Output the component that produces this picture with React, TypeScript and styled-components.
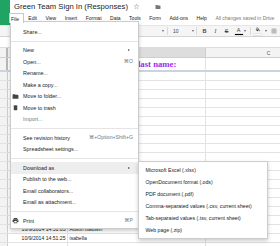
import React from 'react';
import styled, { createGlobalStyle } from 'styled-components';

const GlobalStyle = createGlobalStyle`
  html, body { margin: 0; padding: 0; background: #fff; }
  body { font-family: "Liberation Sans", Arial, sans-serif; overflow: hidden; }
  * { box-sizing: border-box; }
`;

const Page = styled.div`
  position: relative;
  width: 280px;
  height: 246px;
  overflow: hidden;
  background: #fff;
  display: flex;
  flex-direction: column;
`;

/* ---------- header ---------- */
const Header = styled.header`
  display: flex;
  height: 25px;
  flex: none;
`;
const Logo = styled.div`
  width: 10px;
  height: 25px;
  background: #1fa463;
  flex: none;
`;
const HeaderMain = styled.div`
  display: flex;
  flex-direction: column;
  padding-left: 4px;
  min-width: 0;
`;
const TitleRow = styled.div`
  display: flex;
  align-items: center;
  height: 13px;
  gap: 5px;
  white-space: nowrap;
`;
const Title = styled.span`
  font-size: 7.7px;
  color: #222;
`;
const TitleIcon = styled.span<{ $ml?: number }>`
  display: flex;
  margin-left: ${p => p.$ml ?? 0}px;
`;
const MenuBar = styled.nav`
  display: flex;
  height: 9px;
  margin-left: -4.7px;
  font-size: 5px;
  color: #222;
  white-space: nowrap;
`;
const MenuTab = styled.div<{ $active?: boolean }>`
  position: relative;
  display: flex;
  align-items: center;
  padding: ${p => (p.$active ? '0 4px 0 0.7px' : '0 4.25px')};
  ${p =>
    p.$active &&
    `
    background: #fff;
    border: 1px solid #c8c8c8;
    border-bottom: none;
    height: 10px;
    z-index: 5;
  `}
`;
const SavedNote = styled.div`
  display: flex;
  align-items: center;
  padding-left: 4.25px;
  color: #777;
`;

/* ---------- toolbar ---------- */
const Toolbar = styled.div`
  display: flex;
  align-items: center;
  height: 12px;
  flex: none;
  background: #f5f5f5;
  border-top: 1px solid #e6e6e6;
  border-bottom: 1px solid #d4d4d4;
  padding-left: 12px;
  font-size: 5px;
  color: #444;
  white-space: nowrap;
`;
const ToolBtn = styled.div<{ $w: number }>`
  width: ${p => p.$w}px;
  flex: none;
  height: 100%;
  display: flex;
  align-items: center;
  justify-content: center;
  gap: 1px;
`;
const ToolSep = styled.div<{ $m?: number }>`
  width: 1px;
  height: 8px;
  background: #dadada;
  margin: 0 ${p => p.$m ?? 3}px;
  flex: none;
`;
const Select = styled.div<{ $w: number; $pl: number }>`
  width: ${p => p.$w}px;
  flex: none;
  display: flex;
  align-items: center;
  justify-content: space-between;
  padding: 0 0.5px 0 ${p => p.$pl}px;
`;
const Caret = styled.span`
  width: 0;
  height: 0;
  border-left: 1.5px solid transparent;
  border-right: 1.5px solid transparent;
  border-top: 2px solid #666;
  flex: none;
`;
const Glyph = styled.span<{ $weight?: number; $italic?: boolean; $strike?: boolean; $serif?: boolean }>`
  font-size: 5.5px;
  color: #444;
  font-weight: ${p => p.$weight ?? 400};
  font-style: ${p => (p.$italic ? 'italic' : 'normal')};
  text-decoration: ${p => (p.$strike ? 'line-through' : 'none')};
  font-family: ${p => (p.$serif ? '"Liberation Serif", serif' : 'inherit')};
`;
const ColorGlyph = styled.span<{ $bar: string }>`
  display: flex;
  flex-direction: column;
  align-items: center;
  gap: 0.5px;
  &::after {
    content: '';
    width: 8px;
    height: 1.5px;
    background: ${p => p.$bar};
    box-shadow: 0 0 0 0.3px #bbb;
  }
`;

/* ---------- formula bar ---------- */
const FormulaBar = styled.div`
  height: 11px;
  flex: none;
  display: flex;
  align-items: center;
  padding-left: 14px;
  border-bottom: 1px solid #dcdcdc;
  font-size: 5px;
  font-style: italic;
  color: #999;
`;

/* ---------- sheet ---------- */
const COLS = '8px 60px 138px 126px';
const Sheet = styled.div`
  display: flex;
  flex-direction: column;
  flex: none;
`;
const SheetRow = styled.div<{ $h: number; $kind?: 'head' | 'frozen' | 'data' }>`
  display: grid;
  grid-template-columns: ${COLS};
  height: ${p => p.$h}px;
  flex: none;
  border-bottom: ${p =>
    p.$kind === 'frozen' ? '2px solid #ccd3e0' : p.$kind === 'head' ? '1px solid #cfcfcf' : '1px solid #e3e3e3'};
  background: ${p => (p.$kind === 'head' ? '#f3f3f3' : '#fff')};
`;
const RowHead = styled.div<{ $handle?: boolean }>`
  background: #f3f3f3;
  border-right: ${p => (p.$handle ? '2px solid #b9b9b9' : '1px solid #cfcfcf')};
`;
const ColHead = styled.div<{ $sel?: boolean }>`
  background: ${p => (p.$sel ? '#dddddd' : '#f3f3f3')};
  border-right: 1px solid #cfcfcf;
  display: flex;
  align-items: center;
  justify-content: center;
  font-size: 5px;
  color: #555;
`;
const Cell = styled.div<{ $align?: 'left' | 'right' }>`
  border-right: 1px solid #e3e3e3;
  display: flex;
  align-items: flex-end;
  justify-content: ${p => (p.$align === 'right' ? 'flex-end' : 'flex-start')};
  padding: 0 1.5px 0.5px;
  font-size: 5.1px;
  line-height: 1.2;
  color: #222;
  white-space: nowrap;
  min-width: 0;
`;
const QuestionText = styled.span`
  font-family: "Liberation Serif", "Times New Roman", serif;
  font-weight: 700;
  font-size: 8.7px;
  color: #9a2cf0;
`;

/* ---------- dropdown menu ---------- */
const MenuPanel = styled.div`
  position: absolute;
  left: 9.5px;
  top: 21px;
  width: 129px;
  background: #fff;
  border: 1px solid rgba(0, 0, 0, 0.2);
  box-shadow: 0 2px 4px rgba(0, 0, 0, 0.2);
  padding: 4px 0 1px;
  z-index: 2;
  font-size: 5.4px;
  color: #222;
`;
const MenuRow = styled.div<{ $hl?: boolean; $muted?: boolean }>`
  position: relative;
  display: grid;
  grid-template-columns: 12.5px 1fr auto;
  align-items: center;
  height: 11.5px;
  padding-right: 4.5px;
  background: ${p => (p.$hl ? '#eeeeee' : 'transparent')};
  color: ${p => (p.$muted ? '#777' : '#222')};
  white-space: nowrap;
`;
const IconCell = styled.span`
  display: flex;
  align-items: center;
  padding-left: 1.5px;
`;
const Label = styled.span`
  justify-self: start;
`;
const Shortcut = styled.span`
  color: #777;
  font-size: 5.2px;
  line-height: 1;
  font-family: "Liberation Sans", "DejaVu Sans", sans-serif;
`;
const SubArrow = styled.span`
  width: 0;
  height: 0;
  border-left: 2.5px solid #555;
  border-top: 1.6px solid transparent;
  border-bottom: 1.6px solid transparent;
  margin-right: 3px;
`;
const MenuSep = styled.div`
  height: 1px;
  background: #e5e5e5;
  margin: 3px 0;
`;
const SubMenu = styled.div`
  position: absolute;
  left: 100%;
  top: -1px;
  width: 130px;
  background: #fff;
  border: 1px solid rgba(0, 0, 0, 0.2);
  box-shadow: 0 2px 4px rgba(0, 0, 0, 0.2);
  padding: 2px 0;
  z-index: 3;
  font-size: 5.2px;
  color: #222;
`;
const SubRow = styled.div`
  height: 12px;
  display: flex;
  align-items: center;
  padding-left: 7px;
  white-space: nowrap;
`;

/* ---------- icons ---------- */
const Svg = ({ d, size, color }: { d: string; size: number; color: string }) => (
  <svg width={size} height={size} viewBox="0 0 24 24" fill={color}>
    <path d={d} />
  </svg>
);
const FOLDER = 'M10 4H4c-1.1 0-2 .9-2 2v12c0 1.1.9 2 2 2h16c1.1 0 2-.9 2-2V8c0-1.1-.9-2-2-2h-8l-2-2z';
const TRASH = 'M6 19c0 1.1.9 2 2 2h8c1.1 0 2-.9 2-2V7H6v12zM19 4h-3.5l-1-1h-5l-1 1H5v2h14V4z';
const PRINT =
  'M19 8H5c-1.66 0-3 1.34-3 3v6h4v4h12v-4h4v-6c0-1.66-1.34-3-3-3zm-3 11H8v-5h8v5zm3-7c-.55 0-1-.45-1-1s.45-1 1-1 1 .45 1 1-.45 1-1 1zm-1-9H6v4h12V3z';
const STAR =
  'M22 9.24l-7.19-.62L12 2 9.19 8.63 2 9.24l5.46 4.73L5.82 21 12 17.27 18.18 21l-1.630-7.03L22 9.24zM12 15.4l-3.76 2.27 1-4.28-3.32-2.88 4.38-.38L12 6.1l1.71 4.04 4.38.38-3.32 2.88 1 4.28L12 15.4z';
const BUCKET =
  'M16.56 8.94L7.62 0 6.21 1.41l2.38 2.38-5.15 5.150c-.59.59-.59 1.54 0 2.12l5.5 5.5c.29.29.68.44 1.06.44s.77-.15 1.06-.44l5.5-5.5c.59-.58.59-1.53 0-2.12zM5.21 10L10 5.21 14.79 10H5.21zM19 11.5s-2 2.17-2 3.5c0 1.1.9 2 2 2s2-.9 2-2c0-1.33-2-3.5-2-3.5z';
const BORDERS =
  'M3 3v18h18V3H3zm8 16H5v-6h6v6zm0-8H5V5h6v6zm8 8h-6v-6h6v6zm0-8h-6V5h6v6z';
const UNDO =
  'M12.5 8c-2.65 0-5.05.99-6.9 2.6L2 7v9h9l-3.62-3.62c1.39-1.16 3.16-1.88 5.12-1.88 3.54 0 6.55 2.31 7.6 5.5l2.37-.78C21.08 11.03 17.15 8 12.5 8z';
const REDO =
  'M18.4 10.6C16.55 8.99 14.150 8 11.5 8c-4.65 0-8.58 3.03-9.96 7.22L3.9 16c1.05-3.19 4.05-5.5 7.6-5.5 1.95 0 3.73.72 5.12 1.88L13 16h9V7l-3.6 3.6z';

type MI = { label: string; icon?: string; shortcut?: string; sub?: boolean; hl?: boolean; muted?: boolean } | 'sep';

const MENU: MI[] = [
  { label: 'Share...' },
  'sep',
  { label: 'New', sub: true },
  { label: 'Open...', shortcut: '⌘O' },
  { label: 'Rename...' },
  { label: 'Make a copy...' },
  { label: 'Move to folder...', icon: FOLDER },
  { label: 'Move to trash', icon: TRASH },
  { label: 'Import...', muted: true },
  'sep',
  { label: 'See revision history', shortcut: '⌘+Option+Shift+G' },
  { label: 'Spreadsheet settings...' },
  'sep',
  { label: 'Download as', sub: true, hl: true },
  { label: 'Publish to the web...' },
  { label: 'Email collaborators...' },
  { label: 'Email as attachment...' },
  'sep',
  { label: 'Print', icon: PRINT, shortcut: '⌘P' },
];

const DOWNLOADS = [
  'Microsoft Excel (.xlsx)',
  'OpenDocument format (.ods)',
  'PDF document (.pdf)',
  'Comma-separated values (.csv, current sheet)',
  'Tab-separated values (.tsv, current sheet)',
  'Web page (.zip)',
];

const MENUS = ['Edit', 'View', 'Insert', 'Format', 'Data', 'Tools', 'Form', 'Add-ons', 'Help'];

const DATA: Record<number, [string, string]> = {
  17: ['10/9/2014 14:51:03', 'Austin baldwin'],
  18: ['10/9/2014 14:51:25', 'isabella'],
};

export default function App() {
  const rows = Array.from({ length: 20 }, (_, i) => i);
  return (
    <>
      <GlobalStyle />
      <Page>
        <Header>
          <Logo />
          <HeaderMain>
            <TitleRow>
              <Title>Green Team Sign In (Responses)</Title>
              <TitleIcon>
                <Svg d={STAR} size={7} color="#aaa" />
              </TitleIcon>
              <TitleIcon $ml={10}>
                <Svg d={FOLDER} size={6} color="#777" />
              </TitleIcon>
            </TitleRow>
            <MenuBar>
              <MenuTab $active>File</MenuTab>
              {MENUS.map(m => (
                <MenuTab key={m}>{m}</MenuTab>
              ))}
              <SavedNote>All changes saved in Drive</SavedNote>
            </MenuBar>
          </HeaderMain>
        </Header>

        <Toolbar>
          <ToolBtn $w={9}><Svg d={UNDO} size={6} color="#666" /></ToolBtn>
          <ToolBtn $w={9}><Svg d={REDO} size={6} color="#666" /></ToolBtn>
          <ToolBtn $w={9}><Svg d={PRINT} size={6} color="#666" /></ToolBtn>
          <ToolBtn $w={9}><Glyph>¶</Glyph></ToolBtn>
          <ToolSep />
          <ToolBtn $w={9}><Glyph>$</Glyph></ToolBtn>
          <ToolBtn $w={9}><Glyph>%</Glyph></ToolBtn>
          <ToolBtn $w={10}><Glyph>.0</Glyph></ToolBtn>
          <ToolBtn $w={12}><Glyph>.00</Glyph></ToolBtn>
          <ToolBtn $w={16}><Glyph>123</Glyph><Caret /></ToolBtn>
          <ToolSep />
          <Select $w={46} $pl={2}><span>Arial</span><Caret /></Select>
          <ToolSep />
          <Select $w={23} $pl={2}><span>10</span><Caret /></Select>
          <ToolSep $m={2} />
          <ToolBtn $w={11}><Glyph $weight={700}>B</Glyph></ToolBtn>
          <ToolBtn $w={11}><Glyph $italic $serif>I</Glyph></ToolBtn>
          <ToolBtn $w={11}><Glyph $strike>S</Glyph></ToolBtn>
          <ToolBtn $w={16}>
            <ColorGlyph $bar="#000"><Glyph>A</Glyph></ColorGlyph>
            <Caret />
          </ToolBtn>
          <ToolSep $m={2} />
          <ToolBtn $w={10}>
            <ColorGlyph $bar="#fff"><Svg d={BUCKET} size={6} color="#444" /></ColorGlyph>
          </ToolBtn>
          <ToolBtn $w={6}><Caret /></ToolBtn>
          <ToolBtn $w={10}><Svg d={BORDERS} size={6} color="#777" /></ToolBtn>
        </Toolbar>

        <FormulaBar>fx</FormulaBar>

        <Sheet>
          <SheetRow $h={10} $kind="head">
            <RowHead $handle />
            <ColHead>A</ColHead>
            <ColHead $sel>B</ColHead>
            <ColHead>C</ColHead>
          </SheetRow>
          <SheetRow $h={14} $kind="frozen">
            <RowHead $handle />
            <Cell>
              <QuestionText>Please type in your first name and last name:</QuestionText>
            </Cell>
            <Cell />
            <Cell />
          </SheetRow>
          {rows.map(i => (
            <SheetRow key={i} $h={9} $kind="data">
              <RowHead />
              <Cell $align="right">{DATA[i]?.[0] ?? ''}</Cell>
              <Cell>{DATA[i]?.[1] ?? ''}</Cell>
              <Cell />
            </SheetRow>
          ))}
        </Sheet>

        <MenuPanel>
          {MENU.map((m, i) =>
            m === 'sep' ? (
              <MenuSep key={i} />
            ) : (
              <MenuRow key={i} $hl={m.hl} $muted={m.muted}>
                <IconCell>{m.icon && <Svg d={m.icon} size={7} color="#444" />}</IconCell>
                <Label>{m.label}</Label>
                {m.sub ? <SubArrow /> : m.shortcut ? <Shortcut>{m.shortcut}</Shortcut> : <span />}
                {m.hl && (
                  <SubMenu>
                    {DOWNLOADS.map(d => (
                      <SubRow key={d}>{d}</SubRow>
                    ))}
                  </SubMenu>
                )}
              </MenuRow>
            )
          )}
        </MenuPanel>
      </Page>
    </>
  );
}
